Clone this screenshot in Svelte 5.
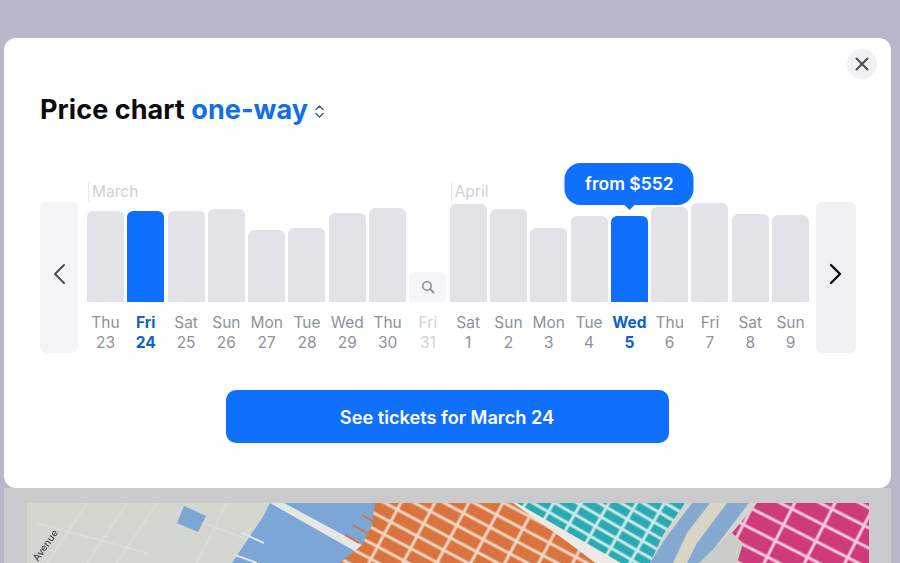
<script>
  const days = [
    { d: 'Thu', n: 23, h: 91 }, { d: 'Fri', n: 24, h: 91, sel: true }, { d: 'Sat', n: 25, h: 91 },
    { d: 'Sun', n: 26, h: 93 }, { d: 'Mon', n: 27, h: 72 }, { d: 'Tue', n: 28, h: 74 },
    { d: 'Wed', n: 29, h: 89 }, { d: 'Thu', n: 30, h: 94 }, { d: 'Fri', n: 31, h: 30, none: true },
    { d: 'Sat', n: 1, h: 98, month: 'April' }, { d: 'Sun', n: 2, h: 93 }, { d: 'Mon', n: 3, h: 74 },
    { d: 'Tue', n: 4, h: 86 }, { d: 'Wed', n: 5, h: 86, sel: true, tip: 'from $552' }, { d: 'Thu', n: 6, h: 95 },
    { d: 'Fri', n: 7, h: 99 }, { d: 'Sat', n: 8, h: 88 }, { d: 'Sun', n: 9, h: 87 }
  ];
  days[0].month = 'March';
</script>

<div class="page">
  <section class="modal">
    <button class="close" aria-label="Close">
      <svg width="14" height="14" viewBox="0 0 14 14"><path d="M1.5 1.5l11 11M12.5 1.5l-11 11" stroke="#4a4d54" stroke-width="2" stroke-linecap="round"/></svg>
    </button>
    <h2>Price chart <span class="way">one-way</span>
      <svg class="updown" width="9" height="15" viewBox="0 0 9 15"><path d="M1 5.5l3.5-3.5 3.5 3.5M1 9.5l3.5 3.5 3.5-3.5" fill="none" stroke="#4a5a7a" stroke-width="1.5" stroke-linecap="round" stroke-linejoin="round"/></svg>
    </h2>

    <div class="chart">
      <button class="nav" aria-label="Previous">
        <svg width="14" height="22" viewBox="0 0 14 22"><path d="M12 2L3 11l9 9" fill="none" stroke="#4b4e55" stroke-width="2" stroke-linecap="round" stroke-linejoin="round"/></svg>
      </button>
      <div class="days">
        {#each days as day}
          <div class="day" class:sel={day.sel} class:none={day.none}>
            <div class="plot">
              {#if day.month}<span class="month">{day.month}</span>{/if}
              {#if day.tip}<span class="tip">{day.tip}</span>{/if}
              <div class="bar" style="height:{day.h}px">
                {#if day.none}
                  <svg width="14" height="14" viewBox="0 0 14 14"><circle cx="6" cy="6" r="4.2" fill="none" stroke="#8e9198" stroke-width="1.6"/><path d="M9.2 9.2l3.3 3.3" stroke="#8e9198" stroke-width="1.8" stroke-linecap="round"/></svg>
                {/if}
              </div>
            </div>
            <div class="label">{day.d}</div>
            <div class="label">{day.n}</div>
          </div>
        {/each}
      </div>
      <button class="nav next" aria-label="Next">
        <svg width="14" height="22" viewBox="0 0 14 22"><path d="M2 2l9 9-9 9" fill="none" stroke="#0b0b0f" stroke-width="2.4" stroke-linecap="round" stroke-linejoin="round"/></svg>
      </button>
    </div>

    <button class="cta">See tickets for March 24</button>
  </section>

  <div class="under">
    <svg class="map" width="842" height="60" viewBox="0 0 842 60" aria-hidden="true">
      <defs>
        <pattern id="orange" width="30" height="14" patternUnits="userSpaceOnUse" patternTransform="rotate(28)">
          <rect width="30" height="14" fill="#f1d5c3"/><rect x="1.5" y="1.5" width="27" height="11" fill="#d9743f"/>
        </pattern>
        <pattern id="teal" width="24" height="11" patternUnits="userSpaceOnUse" patternTransform="rotate(30)">
          <rect width="24" height="11" fill="#cfe9ea"/><rect x="1.5" y="1.5" width="21" height="8" fill="#2aaab3"/>
        </pattern>
        <pattern id="pink" width="36" height="18" patternUnits="userSpaceOnUse" patternTransform="rotate(27)">
          <rect width="36" height="18" fill="#f3c9dc"/><rect x="1.5" y="1.5" width="33" height="15" fill="#cf3a7b"/>
        </pattern>
      </defs>
      <rect width="842" height="60" fill="#d3d7cf"/>
      <g fill="none" stroke="#dcdfd9" stroke-width="1.5">
        <path d="M60 0L20 60M100 0L60 60M130 0L90 60M10 20L120 50M150 10L230 40M200 0L170 60"/>
      </g>
      <path d="M150 20l7-17 22 10-8 16z" fill="#7ba6d6"/>
      <path d="M243 0H362L345 30 320 60H205L225 30 236 14z" fill="#7ba6d6"/>
      <path d="M243 0h14l78 42-4 8z" fill="#e6e7e6"/>
      <path d="M215 30l22 10M208 52l22 8" stroke="#dfe3e6" stroke-width="2"/>
      <path d="M335 12l14 8M326 22l14 8M318 32l14 8" stroke="#d9743f" stroke-width="2"/>
      <path d="M348 0H490L568 60H313L335 42 345 22z" fill="url(#orange)"/>
      <path d="M486 0H492L596 60H570z" fill="#eee9e4"/>
      <path d="M490 0H658L636 32 623 60H594z" fill="url(#teal)"/>
      <path d="M665 0H722L676 60H623L638 36z" fill="#86a9d2"/>
      <path d="M683 0H700L670 40 660 60H646L660 30z" fill="#d8d6c2"/>
      <path d="M705 28L716 40 710 60H672z" fill="#c9cec6"/>
      <path d="M730 0H842V60H710L716 40 705 30z" fill="url(#pink)"/>
      <text x="0" y="0" transform="translate(11 59) rotate(-55)" class="street">Avenue</text>
    </svg>
  </div>
</div>

<style>
  :global(body) { margin: 0; background: #b9b7c9; }
  .page {
    width: 900px; height: 563px; overflow: hidden; box-sizing: border-box;
    padding: 38px 9px 0 4px; background: #b9b7c9;
    font-family: Inter, "Liberation Sans", sans-serif;
  }
  .modal {
    position: relative; z-index: 1; box-sizing: border-box; height: 450px; background: #fff;
    border-radius: 12px; padding: 54px 35px 0 36px; display: flex; flex-direction: column;
  }
  button { font: inherit; border: 0; padding: 0; cursor: pointer; }
  .close {
    position: absolute; top: 11px; right: 14px; width: 30px; height: 30px; border-radius: 50%;
    background: #f1f1f4; display: flex; align-items: center; justify-content: center;
  }
  h2 {
    margin: 0; font-size: 27px; line-height: 36px; font-weight: 700; color: #0b0b0f;
    letter-spacing: 0.06px; display: flex; align-items: center; white-space: pre;
  }
  .way { color: #0f6fe8; }
  .updown { margin: 3px 0 0 7px; }
  .chart { display: flex; align-items: flex-end; height: 169px; margin-top: 56px; }
  .nav {
    width: 38px; height: 151px; flex: none; background: #f5f5f7; border-radius: 6px;
    display: flex; align-items: center; justify-content: center; padding-bottom: 8px; box-sizing: border-box;
  }
  .next { width: 40px; background: #f0f1f3; }
  .days { flex: 1; display: flex; padding-left: 9px; gap: 3.3px; }
  .day { width: 37px; flex: none; text-align: center; color: #8f929a; }
  .plot { height: 100px; position: relative; display: flex; align-items: flex-end; margin-bottom: 11px; }
  .bar { width: 100%; background: #e1e3e8; border-radius: 6px 6px 0 0; }
  .sel .bar { background: #0f6fff; }
  .sel .label { color: #0f5fd0; font-weight: 700; }
  .none .bar { background: #f6f6f8; display: flex; align-items: center; justify-content: center; }
  .none .label { color: #d0d2d6; }
  .label { font-size: 15.5px; line-height: 20px; white-space: nowrap; margin: 0 -3px; }
  .month {
    position: absolute; left: 1px; top: -20px; padding-left: 3px; height: 20px; line-height: 20px;
    font-size: 15.5px; color: #cfd1d5; border-left: 1px solid #e6e7ea;
  }
  .tip {
    position: absolute; left: 50%; bottom: 97px; transform: translateX(-50%); z-index: 2;
    width: 129px; height: 42px; line-height: 42px; border-radius: 16px; background: #0f6fff;
    color: #fff; font-size: 17.5px; font-weight: 600; text-align: center; white-space: nowrap;
  }
  .tip::after {
    content: ""; position: absolute; left: 50%; top: 41px; margin-left: -6px;
    border: 6px solid transparent; border-top-color: #0f6fff; border-bottom: 0;
  }
  .cta {
    align-self: center; width: 443px; height: 53px; margin: 37px 2px 0 0; background: #0f6fff;
    color: #fff; border-radius: 10px; font-size: 18.2px; font-weight: 600;
  }
  .under {
    background: #cbcbce; height: 75px; padding: 15px 22px 0 23px; box-sizing: border-box;
    display: flex;
  }
  .map { display: block; filter: blur(0.7px); }
  .street { font-size: 10px; fill: #45484c; font-weight: 500; }
</style>
